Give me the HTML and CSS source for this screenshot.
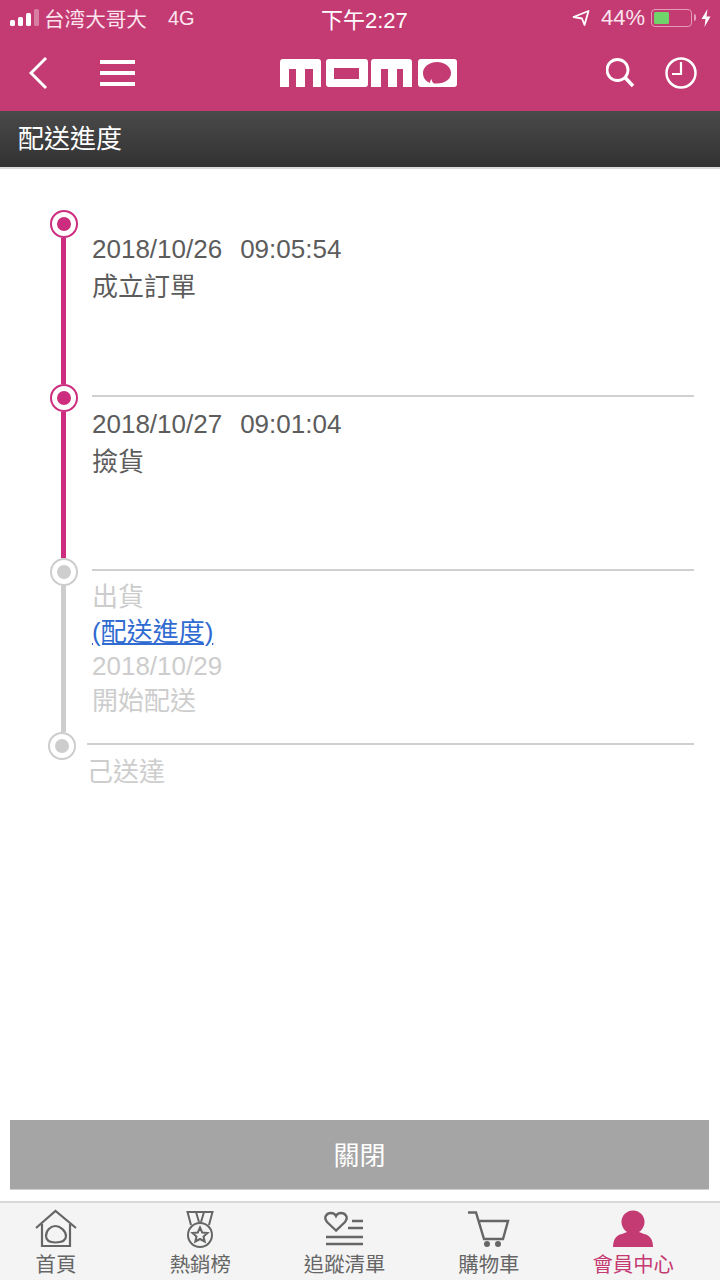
FILE: index.html
```html
<!DOCTYPE html>
<html lang="zh-Hant">
<head>
    <title>配送進度</title>
    <link rel="stylesheet" href="styles.css">
</head>
<body>

<div class="status-bar">
    <div class="status-left">
        <div class="signal">
            <i class="bar1"></i><i class="bar2"></i><i class="bar3"></i><i class="bar4"></i>
        </div>
        <span class="carrier">台湾大哥大</span>
        <span class="network">4G</span>
    </div>
    <div class="status-time">下午2:27</div>
    <div class="status-right">
        <svg class="arrow" width="18" height="16" viewBox="0 0 18 16"><path d="M1.5 7 16.5 1 12.5 15 10 8.5Z" fill="none" stroke="#fff" stroke-width="1.8" stroke-linejoin="round"/></svg>
        <span class="percent">44%</span>
        <div class="battery"><div class="battery-fill"></div></div>
        <svg class="bolt" width="10" height="18" viewBox="0 0 10 18"><path d="M6.5 0 0.5 10H4.5L3.5 18 9.5 7.5H5.5Z" fill="#fff"/></svg>
    </div>
</div>

<header class="nav">
    <div class="nav-left">
        <svg width="20" height="34" viewBox="0 0 20 34"><path d="M17 2 2 17 17 32" fill="none" stroke="#fff" stroke-width="3"/></svg>
        <div class="burger"><i></i><i></i><i></i></div>
    </div>
    <svg class="logo" width="177" height="28" viewBox="0 0 177 28">
        <path fill="#fff" d="M3 0H38Q41 0 41 3V28H33V10H25V28H16V10H9V28H0V3Q0 0 3 0Z"/>
        <path fill="#fff" fill-rule="evenodd" d="M49 0H85Q88 0 88 3V25Q88 28 85 28H49Q46 28 46 25V3Q46 0 49 0ZM54 9V20H79V9Z"/>
        <path fill="#fff" d="M94 0H129Q132 0 132 3V28H123V10H117V28H108V10H101V28H91V3Q91 0 94 0Z"/>
        <path fill="#fff" fill-rule="evenodd" d="M141 0H174Q177 0 177 3V25Q177 28 174 28H141Q138 28 138 25V3Q138 0 141 0ZM157 3C149 3 143 8 143 14C143 19 146 22.500 150 24C150 22.500 150.500 21 151.500 20C151.500 21.500 152.500 23.500 154 24.500C155 24.500 156 24.500 157 24.500C165 24.500 171 20 171 14C171 8 165 3 157 3Z"/>
    </svg>
    <div class="nav-right">
        <svg width="30" height="30" viewBox="0 0 30 30"><circle cx="11.500" cy="12" r="10.500" fill="none" stroke="#fff" stroke-width="2.800"/><path d="M19 19.500 27 28" stroke="#fff" stroke-width="3.500"/></svg>
        <svg width="32" height="32" viewBox="0 0 32 32"><circle cx="16" cy="16" r="14.500" fill="none" stroke="#fff" stroke-width="2.500"/><path d="M16 5V17H7" fill="none" stroke="#fff" stroke-width="2.200"/></svg>
    </div>
</header>

<div class="page-title">配送進度</div>

<main class="timeline">
    <div class="step done">
        <div class="rail"><div class="dot"></div><div class="line"></div></div>
        <div class="step-body no-rule">
            <p class="date">2018/10/26<span class="time">09:05:54</span></p>
            <p>成立訂單</p>
        </div>
    </div>
    <div class="step done">
        <div class="rail"><div class="dot"></div><div class="line"></div></div>
        <div class="step-body">
            <p class="date">2018/10/27<span class="time">09:01:04</span></p>
            <p>撿貨</p>
        </div>
    </div>
    <div class="step todo">
        <div class="rail"><div class="dot"></div><div class="line"></div></div>
        <div class="step-body shipped">
            <p>出貨</p>
            <p><a href="#">(配送進度)</a></p>
            <p>2018/10/29</p>
            <p>開始配送</p>
        </div>
    </div>
    <div class="step todo last">
        <div class="rail"><div class="dot"></div></div>
        <div class="step-body">
            <p>己送達</p>
        </div>
    </div>
</main>

<button class="close-btn">關閉</button>

<nav class="tabs">
    <div class="tab">
        <svg width="44" height="42" viewBox="34 1208 44 42" fill="none" stroke="#666" stroke-width="2.200">
            <path d="M36 1228 55.500 1211 76 1228M42 1224V1246H70V1224"/>
            <path d="M46 1236C46 1230 51 1226 55.500 1226C60 1226 66 1231 66 1236C66 1241 61 1242.500 55.500 1242.500C50 1242.500 46 1241 46 1236Z"/>
        </svg>
        <span>首頁</span>
    </div>
    <div class="tab">
        <svg width="44" height="42" viewBox="178 1208 44 42" fill="none" stroke="#666" stroke-width="2">
            <path d="M191 1225 187.500 1212H212.500L209 1225M196 1212 199 1222M204 1212 201 1222"/>
            <circle cx="200" cy="1235" r="12"/>
            <path d="M200 1227.500 202.200 1232.500 207.500 1233 203.500 1236.500 204.700 1241.500 200 1239 195.300 1241.500 196.500 1236.500 192.500 1233 197.800 1232.500Z"/>
        </svg>
        <span>熱銷榜</span>
    </div>
    <div class="tab">
        <svg width="44" height="42" viewBox="323 1208 44 42" fill="none" stroke="#666" stroke-width="2.400">
            <path d="M336 1230.500 327 1222C323 1217 327 1213 331 1213C333 1213 335 1214 336 1216C337 1214 339 1213 341 1213C345 1213 349 1217 345 1222Z"/>
            <path d="M352 1221H363M348 1228H363M326 1237H363M326 1244H363"/>
        </svg>
        <span>追蹤清單</span>
    </div>
    <div class="tab">
        <svg width="44" height="42" viewBox="467 1208 44 42" fill="none" stroke="#666" stroke-width="2.400">
            <path d="M468 1212.500H476L484 1239H503L508 1221H479"/>
            <circle cx="487" cy="1244" r="3" fill="#666" stroke="none"/>
            <circle cx="498" cy="1244" r="3" fill="#666" stroke="none"/>
        </svg>
        <span>購物車</span>
    </div>
    <div class="tab active">
        <svg width="44" height="42" viewBox="611 1208 44 42" fill="#c43a72">
            <circle cx="633" cy="1222" r="11.500"/>
            <path d="M613 1247C613 1240 616 1235 622 1234L627 1232H639L644 1234C650 1235 653 1240 653 1247Z"/>
        </svg>
        <span>會員中心</span>
    </div>
</nav>

</body>
</html>
```

FILE: styles.css
```css
* {
    box-sizing: border-box;
}
html, body {
    margin: 0;
    height: 1280px;
    overflow: hidden;
}
body {
    display: flex;
    flex-direction: column;
    background: #fff;
    font-family: "Liberation Sans", "Noto Sans CJK TC", sans-serif;
}

.status-bar {
    display: grid;
    grid-template-columns: 321px auto 1fr;
    align-items: center;
    height: 35px;
    background: #c43a72;
    color: #fff;
    font-size: 20px;
}
.status-left {
    display: flex;
    align-items: center;
    padding-left: 10px;
}
.signal {
    display: flex;
    align-items: flex-end;
    gap: 3px;
    height: 17px;
    margin-right: 5px;
}
.signal i {
    display: block;
    width: 5px;
    border-radius: 1.5px;
    background: #fff;
}
.bar1 { height: 6px; }
.bar2 { height: 9px; }
.bar3 { height: 13px; }
.bar4 { height: 17px; opacity: 0.35; }
.carrier {
    font-size: 20.600px;
    color: #fbe4ee;
}
.network {
    margin: 1px 0 0 21px;
    color: #fbe4ee;
}
.status-time {
    font-size: 22px;
}
.status-right {
    display: flex;
    align-items: center;
    justify-content: flex-end;
    padding-right: 9px;
}
.percent {
    margin-left: 11px;
    font-size: 22px;
    color: #fbe4ee;
}
.battery {
    position: relative;
    width: 41px;
    height: 18px;
    margin-left: 6px;
    padding: 2px;
    border: 1.5px solid #e79bba;
    border-radius: 4px;
}
.battery::after {
    content: "";
    position: absolute;
    right: -4.500px;
    top: 4px;
    width: 2px;
    height: 7px;
    border-radius: 0 2px 2px 0;
    background: #e79bba;
}
.battery-fill {
    width: 15px;
    height: 100%;
    border-radius: 1.500px;
    background: #6fd469;
}
.bolt {
    margin-left: 9px;
}

.nav {
    display: flex;
    align-items: center;
    height: 76px;
    padding-top: 3px;
    background: #c43a72;
}
.nav-left {
    display: flex;
    align-items: center;
    gap: 51px;
    width: 280px;
    padding-left: 29px;
    padding-bottom: 3px;
}
.burger {
    display: flex;
    flex-direction: column;
    gap: 7px;
    width: 35px;
}
.burger i {
    display: block;
    height: 4px;
    background: #fff;
}
.logo {
    margin-bottom: 3px;
}
.nav-right {
    display: flex;
    align-items: center;
    gap: 29px;
    margin-left: auto;
    padding-right: 23px;
    padding-bottom: 3px;
}

.page-title {
    height: 58px;
    padding: 9px 18px 0;
    border-bottom: 2px solid #dcdcdc;
    background: linear-gradient(#4a4a4a, #323232);
    color: #fff;
    font-size: 26px;
    line-height: 38px;
}

.timeline {
    flex: 1;
    padding: 41px 26px 0 50px;
}
.step {
    display: flex;
    height: 174px;
}
.rail {
    display: flex;
    flex-direction: column;
    flex: none;
    width: 28px;
}
.dot {
    flex: none;
    width: 28px;
    height: 28px;
    padding: 5px;
    border: 2px solid #cdcdcd;
    border-radius: 50%;
    background: #fff;
    background-clip: content-box;
}
.dot::after {
    content: "";
    display: block;
    width: 14px;
    height: 14px;
    border-radius: 50%;
    background: #cdcdcd;
}
.line {
    flex: 1;
    width: 5px;
    margin-left: 11px;
    background: #cdcdcd;
}
.step-body {
    flex: 1;
    margin: 11px 0 0 14px;
    padding-top: 10px;
    border-top: 2px solid #d0d0d0;
    color: #cdcdcd;
    font-size: 26px;
    line-height: 34.500px;
}
.step-body p {
    margin: 0;
}
.step-body a {
    color: #2f6bd0;
}
.no-rule {
    padding-top: 9px;
    border-top-color: transparent;
}
.shipped {
    padding-top: 9px;
}
.date {
    margin-bottom: 3px !important;
}
.time {
    margin-left: 18px;
}
.done .step-body {
    color: #5c5c5c;
}
.done .dot {
    border-color: #cc2d7f;
}
.done .dot::after,
.done .line {
    background: #cc2d7f;
}
.last {
    margin-left: -2px;
}
.last .step-body {
    margin-left: 11px;
}

.close-btn {
    display: block;
    flex: none;
    width: 699px;
    height: 70px;
    margin: 0 0 11px 10px;
    padding: 0 0 3px;
    border: none;
    border-bottom: 1px solid #cfcfcf;
    background: #a5a5a5;
    color: #fff;
    font-family: inherit;
    font-size: 26px;
}

.tabs {
    display: grid;
    grid-template-columns: repeat(5, 112px);
    column-gap: 32.300px;
    flex: none;
    height: 79px;
    padding-top: 5px;
    border-top: 2px solid #d9d9d9;
    background: #f4f4f4;
}
.tab {
    display: flex;
    flex-direction: column;
    align-items: center;
    color: #666;
    font-size: 20.400px;
    line-height: 24px;
}
.tab span {
    margin-top: 3px;
}
.tab.active {
    color: #c43a72;
}
```
